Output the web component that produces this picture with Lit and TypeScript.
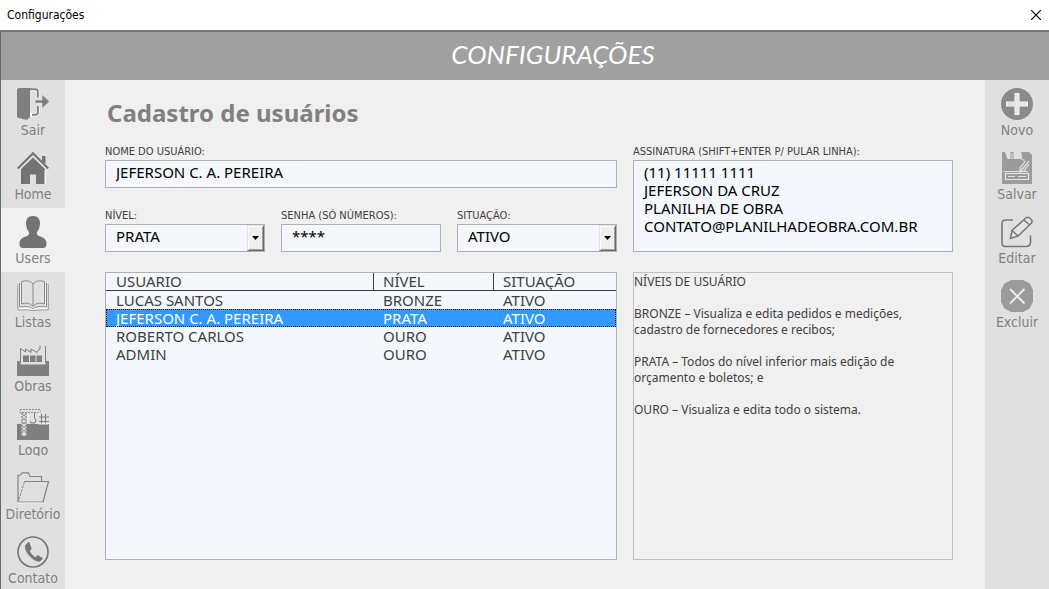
import { LitElement, html, css, svg, nothing } from "lit";
import { customElement, property, state } from "lit/decorators.js";
import { classMap } from "lit/directives/class-map.js";

const icons: Record<string, unknown> = {
  sair: svg`
    <path d="M0 1.5 1.5 0H18V1.5H13V29L10 32 0 29.5z" fill="#7f7f7f"/>
    <path d="M13 1.2h5.5q2.3 0 2.3 2.3v6M20.800 18v6.500q0 2.300-2.300 2.300H13" fill="none" stroke="#fff" stroke-width="3.500"/>
    <path d="M13 1.200h5.500q2.300 0 2.300 2.300v6M20.800 18v6.500q0 2.300-2.300 2.300H15" fill="none" stroke="#7f7f7f" stroke-width="2"/>
    <path d="M18 12h7V6.500l7.500 7L25 20.500V15h-7z" fill="#7f7f7f" stroke="#f4f4f4" stroke-width=".5"/>`,
  home: svg`
    <path d="M25 4h3.500v8L25 9zM4 17 16 5.500 28 17V32H19V22.500H13V32H4z" fill="#737373"/>
    <path d="M1.500 17.800 16 3.500 30.500 17.800M28 18v14" fill="none" stroke="#fff" stroke-width="1"/>
    <path d="M.8 16.500 16 1.400 31.200 16.500" fill="none" stroke="#737373" stroke-width="2.200"/>`,
  users: svg`
    <path d="M16 0c5 0 7.300 3.500 7 8-.3 4-1.500 6-3 8-.6 2 .2 3.500 2.500 4.200 4.500 1.300 7 3.300 7 7.300 0 3-1 4.500-3.500 4.500H6c-2.500 0-3.500-1.500-3.500-4.500 0-4 2.500-6 7-7.300C11.800 19.500 12.600 18 12 16c-1.500-2-2.700-4-3-8-.3-4.500 2-8 7-8z" fill="#737373"/>`,
  listas: svg`
    <path d="M2 5v24h12l2 1.500 2-1.500h12V5" fill="none" stroke="#fff" stroke-width="3"/>
    <path d="M4.500 1.500C9 .3 13.500.5 16 4c2.500-3.500 7-3.700 11.500-2.500V24C23 22.500 19 23 16 26.500 13 23 9 22.500 4.500 24zM16 4v22M2.500 3v24C8 26 12 26 16 29c4-3 8-3 13.500-2V3M.8 4.500V30H13l3 1 3-1h12.200V4.500" fill="none" stroke="#888" stroke-width="1"/>`,
  obras: svg`
    <path d="M0 17h3.500v3.500h25V17H32v15H0z" fill="#7f7f7f"/>
    <path d="M6 11.500h6V18H6zM13 11.500h5.500V18H13zM19.500 11.500H25V18h-5.500z" fill="#7f7f7f"/>
    <path d="M3.500 18V4.500L8.500 8V5l5.500 3.500V5L20 8.500 21 6.500 23 5V1.500M28.500 18V2" fill="none" stroke="#7f7f7f"/>`,
  logo: svg`
    <path d="M0 16h32v16H0z" fill="#7f7f7f"/>
    <path d="M4.500 3.500h5V28h-5z" fill="#e0e0e0"/>
    <path d="M3 1.500h20v3H3z" fill="none" stroke="#8a8a8a" stroke-dasharray="2 1"/>
    <path d="M4.500 5l5 4-5 4 5 4-5 4 5 4M9.500 5l-5 4 5 4-5 4 5 4-5 4M5 5v23M9 5v23" fill="none" stroke="#8a8a8a" stroke-dasharray="2 1"/>
    <path d="M17.500 5v5l1.500 2-1 3h-4l-1-2M22 9h10M22 13.500h10M24.500 6v11M28.500 6v11" fill="none" stroke="#7f7f7f"/>
    <path d="M22 2.500v5M11 6v9M21.500 16h10" stroke="#fff" stroke-width=".8"/>`,
  diretorio: svg`
    <path d="M1 30V3.500L3.500 3 5 .8h6.500L13 4.500h11.500V9M1 30h25.500" fill="none" stroke="#858585" stroke-width="1.200"/>
    <path d="M7.500 9.500H31.500L26 30" fill="none" stroke="#858585" stroke-width="1.200"/>
    <path d="M7.500 9.500 1.500 29" stroke="#858585" stroke-dasharray="3 1"/>
    <path d="M1 31h25" stroke="#fff" stroke-width=".7"/>`,
  contato: svg`
    <circle cx="16" cy="16" r="15" fill="none" stroke="#777" stroke-width="1.700"/>
    <path d="M11 6 8 9C7 12 8.500 16.500 12.500 20.500c3.500 3.800 7 6 10.500 5.500l2.800-2.800c.4-.6.300-1.200-.3-1.600l-4-2.500c-.7-.4-1.300-.2-1.800.4l-1 1.300c-2.800-1.400-4.500-3.300-5.400-5.900l1.200-1.200c.5-.5.6-1 .3-1.700L12.900 6.500c-.4-.9-1.300-1.100-1.900-.5z" fill="#777" stroke="#f6f6f6" stroke-width=".6"/>`,
  novo: svg`
    <circle cx="16" cy="16" r="16" fill="#8a8a8a"/>
    <path d="M16 5v22M5 16h22" stroke="#fff" stroke-width="5"/>
    <path d="M16 5.500v21M5.500 16h21" stroke="#e6e6e6" stroke-width="3.800"/>`,
  salvar: svg`
    <path d="M1 0h3l2.500 7h3V0h3v7H20V0h8l3 3v29H1z" fill="#9b9b9b"/>
    <path d="M2.500 19.500H27M11 1v6M20 1l1 7h3" fill="none" stroke="#e0e0e0"/>
    <path d="M28 9 19 20M24.500 9l-5.500 7v4l4-1 5-7M4.500 21.500h23v6h-23z" fill="none" stroke="#e6e6e6" stroke-width="1.200"/>
    <path d="M7 24.500h7M17 24.500h8" stroke="#e0e0e0"/>`,
  editar: svg`
    <path d="M12 4H4.500Q1 4 1 7.500V27Q1 30.500 4.500 30.500H25Q29.500 30.500 29.500 26V19.500" fill="none" stroke="#777" stroke-width="1.600"/>
    <path d="M9.500 22.500 11 14.500 25 1.800q2-1.300 4 .4l1 1q2 2 .3 4L17 20zM23 4l5.500 5M11 14.500l6 5.500" fill="#e4e4e4" stroke="#777" stroke-width="1.500"/>`,
  excluir: svg`
    <path d="M10 0h12l7 3.500L32 10v12l-3.500 6.500L22 32H10l-6.500-3.500L0 22V10l3.500-6.500z" fill="#9b9b9b"/>
    <path d="M9 9 23.500 23.500M23.500 9 9 23.500" stroke="#f0f0f0" stroke-width="1.800"/>`,
};

@customElement("tool-bar")
class ToolBar extends LitElement {
  @property({ attribute: false }) items: [string, string][] = [];
  @property() current = "";

  static styles = css`
    :host { display: block; background: #e0e0e0; }
    nav { display: flex; flex-direction: column; }
    button {
      display: flex; flex-direction: column; align-items: center;
      width: 100%; height: 64px; padding: 8px 0; border: 0;
      background: none; color: #808080;
      font: 14px/16px "DejaVu Sans Condensed", "Noto Sans", sans-serif;
    }
    .current { background: #f0f0f0; }
    svg { display: block; flex: none; width: 32px; height: 32px; }
    .label { height: 16px; line-height: 20px; overflow: hidden; }
  `;

  render() {
    return html`<nav>
      ${this.items.map(
        ([id, label]) => html`<button
          type="button"
          class=${classMap({ current: id === this.current })}
          aria-current=${id === this.current ? "page" : nothing}
        >
          <svg viewBox="0 0 32 32" aria-hidden="true">${icons[id]}</svg>
          <span class="label">${label}</span>
        </button>`
      )}
    </nav>`;
  }
}

@customElement("app-root")
class AppRoot extends LitElement {
  @state() private selected = 1;

  private left: [string, string][] = [
    ["sair", "Sair"], ["home", "Home"], ["users", "Users"], ["listas", "Listas"],
    ["obras", "Obras"], ["logo", "Logo"], ["diretorio", "Diretório"], ["contato", "Contato"],
  ];
  private right: [string, string][] = [
    ["novo", "Novo"], ["salvar", "Salvar"], ["editar", "Editar"], ["excluir", "Excluir"],
  ];
  private users = [
    ["LUCAS SANTOS", "BRONZE", "ATIVO"],
    ["JEFERSON C. A. PEREIRA", "PRATA", "ATIVO"],
    ["ROBERTO CARLOS", "OURO", "ATIVO"],
    ["ADMIN", "OURO", "ATIVO"],
  ];

  static styles = css`
    :host {
      display: flex; flex-direction: column; height: 100vh; overflow: hidden;
      background: #f0f0f0; color: #404040;
      font-family: "Noto Sans", sans-serif;
    }
    * { box-sizing: border-box; }
    .titlebar {
      display: flex; flex: none; align-items: center; justify-content: space-between;
      height: 30px; padding: 0 8px 0 7px; background: #fff; color: #000;
      font: 12px "DejaVu Sans Condensed", "Noto Sans", sans-serif;
    }
    .close { display: flex; padding: 0; border: 0; background: none; }
    .close svg { width: 10px; height: 10px; }
    .window {
      flex: 1; min-height: 0; display: flex; flex-direction: column;
      border-top: 2px solid #757575; border-left: 1px solid #696969;
    }
    .banner {
      flex: none; height: 48px; padding-left: 56px; background: #a0a0a0; color: #fff; text-align: center;
      font: italic 400 26px/44px Lato, "Noto Sans", sans-serif;
    }
    .body {
      flex: 1; min-height: 0; display: grid;
      grid-template-columns: 64px 1fr 64px; grid-template-rows: minmax(0, 1fr);
    }
    main { display: flex; flex-direction: column; padding: 16px 32px 29px 40px; }
    h1 {
      margin: 0 0 14px; padding-left: 2px; color: #808080;
      font-size: 24px; line-height: 34px;
    }
    .panels {
      flex: 1; display: grid; gap: 20px 16px;
      grid-template-columns: 8fr 5fr; grid-template-rows: auto 1fr;
    }
    .fields { display: grid; grid-template-columns: repeat(3, 1fr); gap: 20px 16px; }
    .field { display: flex; flex-direction: column; min-width: 0; }
    .wide { grid-column: 1 / -1; }
    label {
      height: 16px; line-height: 16px; white-space: nowrap;
      font-family: "DejaVu Sans Condensed", "Noto Sans", sans-serif; font-size: 11px;
    }
    input, select, textarea {
      width: 100%; height: 28px; margin: 0; padding: 0 10px 4px; border: 1px solid #b0b0b0; border-radius: 0;
      background: #f4f8fd; color: #000; outline: none;
      font: 15px/18px "Noto Sans", sans-serif;
    }
    select { appearance: none; padding: 0 28px 4px 10px; }
    textarea { display: block; flex: 1; padding: 2px 10px; resize: none; overflow: hidden; }
    .combo { position: relative; }
    .drop {
      position: absolute; top: 1px; right: 1px; bottom: 1px; width: 17px;
      display: flex; align-items: center; justify-content: center;
      background: #f0f0f0; pointer-events: none;
      border: 1px solid; border-color: #e3e3e3 #696969 #696969 #e3e3e3;
      box-shadow: inset 1px 1px #fff, inset -1px -1px #a0a0a0;
    }
    .drop svg { width: 7px; height: 4px; }
    .list { border: 1px solid #b0b0b0; background: #f4f8fd; }
    table {
      width: 100%; border-collapse: separate; border-spacing: 0; table-layout: fixed;
      font-size: 15px; line-height: 17px;
    }
    .name { width: 268px; }
    .level { width: 120px; }
    th, td { height: 18px; padding: 0 0 0 10px; text-align: left; font-weight: 400; white-space: nowrap; }
    th { border-bottom: 1px solid #404040; border-right: 1px solid #404040; }
    th:last-child { border-right: 0; }
    th + th, td + td { padding-left: 9px; }
    .selected { background: #3399ff; color: #fff; outline: 1px dotted #201000; outline-offset: -1px; }
    .info {
      border: 1px solid #c0c0c0; font-size: 12px; line-height: 16px;
      padding: 1px 24px 0 0;
    }
    .info p { margin: 0 0 16px; }
  `;

  private combo(id: string, label: string, options: string[]) {
    return html`<div class="field">
      <label for=${id}>${label}</label>
      <div class="combo">
        <select id=${id}>${options.map((o) => html`<option>${o}</option>`)}</select>
        <span class="drop"><svg viewBox="0 0 7 4" aria-hidden="true"><path d="M0 0h7L3.500 4z"/></svg></span>
      </div>
    </div>`;
  }

  render() {
    return html`
      <header class="titlebar">
        <span>Configurações</span>
        <button class="close" type="button" aria-label="Fechar">
          <svg viewBox="0 0 10 10"><path d="M0 0 10 10M10 0 0 10" stroke="#000" stroke-width="1.200"/></svg>
        </button>
      </header>
      <div class="window">
        <div class="banner">CONFIGURAÇÕES</div>
        <div class="body">
          <tool-bar .items=${this.left} current="users"></tool-bar>
          <main>
            <h1>Cadastro de usuários</h1>
            <div class="panels">
              <div class="fields">
                <div class="field wide">
                  <label for="nome">NOME DO USUÁRIO:</label>
                  <input id="nome" .value=${"JEFERSON C. A. PEREIRA"} />
                </div>
                ${this.combo("nivel", "NÍVEL:", ["PRATA", "BRONZE", "OURO"])}
                <div class="field">
                  <label for="senha">SENHA (SÓ NÚMEROS):</label>
                  <input id="senha" inputmode="numeric" autocomplete="off" .value=${"****"} />
                </div>
                ${this.combo("situacao", "SITUAÇÃO:", ["ATIVO", "INATIVO"])}
              </div>
              <div class="field">
                <label for="assinatura">ASSINATURA (SHIFT+ENTER P/ PULAR LINHA):</label>
                <textarea id="assinatura" spellcheck="false" .value=${"(11) 11111 1111\nJEFERSON DA CRUZ\nPLANILHA DE OBRA\nCONTATO@PLANILHADEOBRA.COM.BR"}></textarea>
              </div>
              <div class="list">
                <table>
                  <thead>
                    <tr><th class="name">USUARIO</th><th class="level">NÍVEL</th><th>SITUAÇÃO</th></tr>
                  </thead>
                  <tbody>
                    ${this.users.map(
                      (row, i) => html`<tr
                        class=${classMap({ selected: i === this.selected })}
                        @click=${() => (this.selected = i)}
                      >${row.map((cell) => html`<td>${cell}</td>`)}</tr>`
                    )}
                  </tbody>
                </table>
              </div>
              <section class="info">
                <p>NÍVEIS DE USUÁRIO</p>
                <p>BRONZE – Visualiza e edita pedidos e medições, cadastro de fornecedores e recibos;</p>
                <p>PRATA – Todos do nível inferior mais edição de orçamento e boletos; e</p>
                <p>OURO – Visualiza e edita todo o sistema.</p>
              </section>
            </div>
          </main>
          <tool-bar .items=${this.right}></tool-bar>
        </div>
      </div>
    `;
  }
}
